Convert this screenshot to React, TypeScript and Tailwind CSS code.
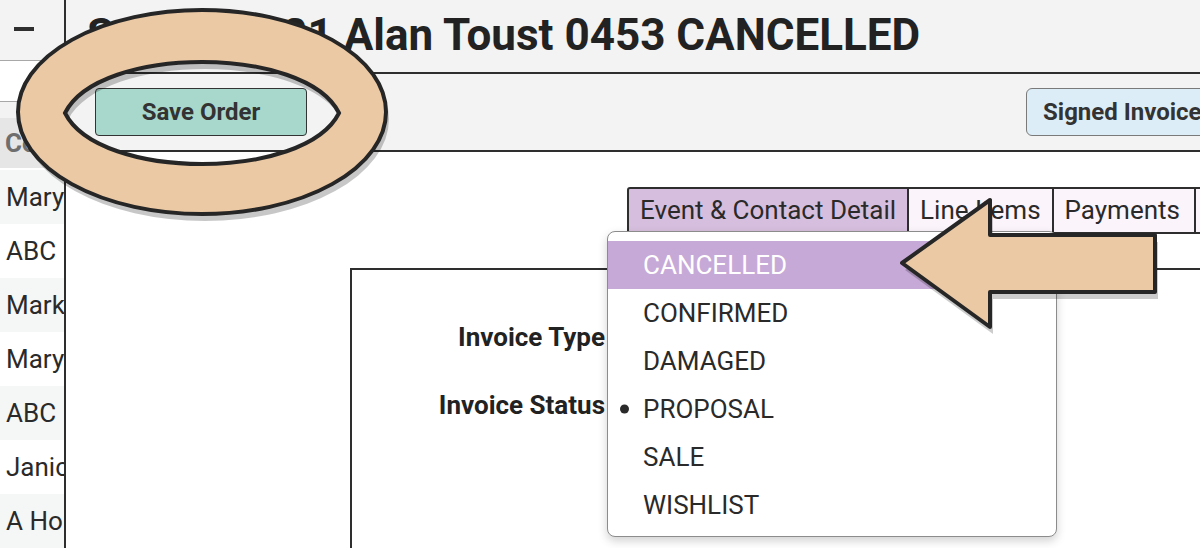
import React from 'react'

// contacts rail on the left, alternate rows are shaded
const contacts = [
  { name: 'Mary Stevens', shaded: true },
  { name: 'ABC Rentals', shaded: false },
  { name: 'Mark Holden', shaded: true },
  { name: 'Mary Lowell', shaded: false },
  { name: 'ABC Events', shaded: true },
  { name: 'Janice Ward', shaded: false },
  { name: 'A House of Flowers', shaded: true },
]

const statuses = ['CANCELLED', 'CONFIRMED', 'DAMAGED', 'PROPOSAL', 'SALE', 'WISHLIST']

const tabs = [
  { label: 'Event & Contact Detail', active: true },
  { label: 'Line Items', active: false },
  { label: 'Payments', active: false },
  { label: 'Documents', active: false },
]

const RING =
  'M18,112 A184,102 0 1,0 386,112 A184,102 0 1,0 18,112 Z ' +
  'M65,113 C99,45 305,45 339,113 C305,181 99,181 65,113 Z'

const ARROW = 'M902,263 L990,200 L990,235 L1155,235 L1155,292 L990,292 L990,327 Z'

function Sidebar() {
  return (
    <aside className="w-[66px] shrink-0 border-r-2 border-[#2e2e2e] flex flex-col overflow-hidden">
      <div className="h-[58px] bg-[#f3f3f3] flex items-center justify-center pr-[16px]">
        <div className="w-[20px] h-[4px] bg-[#2e2e2e]" />
      </div>
      <div className="h-[2px] bg-[#f3f3f3]" />
      <div className="h-[42px] bg-white border-y border-[#a8a8a8] rounded-r-md" />
      <div className="h-[16px] bg-[#f3f3f3]" />
      <div className="h-[50px] bg-[#e6e6e6] flex items-center pl-[5px] text-[26px] font-bold text-[#6e6e6e] whitespace-nowrap">
        Contact
      </div>
      <div className="h-[2px] bg-white" />
      {contacts.map((c) => (
        <div
          key={c.name}
          className={`h-[54px] shrink-0 flex items-center pl-[6px] text-[26px] text-[#2a2a2a] whitespace-nowrap ${
            c.shaded ? 'bg-[#f5f6f6]' : 'bg-white'
          }`}
        >
          {c.name}
        </div>
      ))}
    </aside>
  )
}

function StatusMenu() {
  return (
    <div className="absolute left-[607px] top-[231px] w-[450px] h-[306px] bg-white border border-[#8c8c8c] rounded-[8px] shadow-[0_4px_10px_rgba(0,0,0,0.18)] pt-[9px]">
      {statuses.map((s, i) => (
        <div
          key={s}
          className={`relative h-[48px] flex items-center pl-[35px] text-[26px] ${
            i === 0 ? 'bg-[#c6a9d7] text-white' : 'text-[#2a2a2a]'
          }`}
        >
          {s === 'PROPOSAL' && (
            <span className="absolute left-[12px] top-1/2 -translate-y-1/2 w-[9px] h-[9px] rounded-full bg-[#2a2a2a]" />
          )}
          {s}
        </div>
      ))}
    </div>
  )
}

export default function App() {
  return (
    <div className="relative w-[1200px] h-[548px] overflow-hidden bg-white flex font-['Roboto',sans-serif]">
      <Sidebar />

      <main className="flex-1 min-w-0 flex flex-col">
        {/* Title bar */}
        <div className="h-[74px] shrink-0 bg-[#f3f3f3] border-b-2 border-[#2e2e2e] flex items-center pl-[21px]">
          <h1 className="text-[44px] font-bold text-[#222] whitespace-nowrap leading-none -mt-[2px]">
            Sales 00021 Alan Toust 0453 CANCELLED
          </h1>
        </div>

        {/* Action bar */}
        <div className="h-[78px] shrink-0 bg-[#f3f3f3] border-b-2 border-[#2e2e2e] flex items-center">
          <button className="ml-[29px] w-[212px] h-[48px] shrink-0 bg-[#a8d8cc] border border-[#333] rounded-[4px] text-[24px] font-bold text-[#333]">
            Save Order
          </button>
          <button className="ml-[719px] w-[230px] h-[48px] shrink-0 bg-[#ddedf7] border-[1.5px] border-[#7a7a7a] rounded-[6px] text-[24px] font-bold text-[#333] text-left pl-[16px] whitespace-nowrap">
            Signed Invoice
          </button>
        </div>

        {/* Tabs */}
        <div className="mt-[35px] ml-[561px] flex h-[47px] shrink-0 whitespace-nowrap">
          {tabs.map((t, i) => (
            <div
              key={t.label}
              className={`h-full flex items-center px-[11px] text-[26px] text-[#2a2a2a] border-2 border-[#2e2e2e] ${
                i > 0 ? '-ml-[2px]' : ''
              } ${t.active ? 'bg-[#d6bfde] rounded-tl-[3px]' : 'bg-[#fbf4fb]'} ${
                t.label === 'Payments' ? 'pr-[14px]' : ''
              }`}
            >
              {t.label}
            </div>
          ))}
        </div>

        {/* Detail panel */}
        <section className="mt-[34px] ml-[284px] flex-1 border-l-2 border-t-2 border-[#2e2e2e] -mr-[4px]">
          <div className="w-[253px] pt-[52px] flex flex-col gap-[38px] text-right text-[26px] font-bold text-[#222]">
            <div className="h-[30px] leading-[30px]">Invoice Type</div>
            <div className="h-[30px] leading-[30px]">Invoice Status</div>
          </div>
        </section>
      </main>

      <StatusMenu />

      {/* Callouts drawn over the page */}
      <svg className="pointer-events-none absolute inset-0" width="1200" height="548">
        <path d={RING} fillRule="evenodd" fill="#000" opacity="0.22" transform="translate(3,7)" />
        <path d={RING} fillRule="evenodd" fill="#ebc9a5" stroke="#262626" strokeWidth="4" />
        <path d={ARROW} fill="#000" opacity="0.2" transform="translate(3,7)" strokeLinejoin="round" />
        <path d={ARROW} fill="#ebc9a5" stroke="#262626" strokeWidth="4" strokeLinejoin="round" />
      </svg>
    </div>
  )
}
